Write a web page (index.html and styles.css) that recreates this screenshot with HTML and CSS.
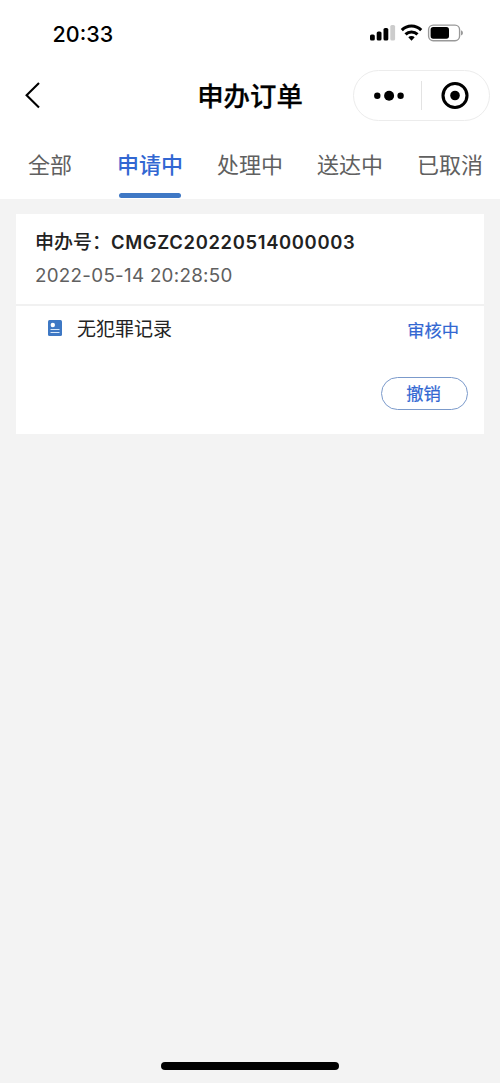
FILE: index.html
```html
<!DOCTYPE html>
<html lang="zh-CN">
<head>
<meta charset="utf-8">
<title>申办订单</title>
<link rel="stylesheet" href="styles.css">
</head>
<body>
<div class="screen">
  <header class="status-bar">
    <span class="clock">20:33</span>
    <svg class="status-icons" width="94" height="18" viewBox="0 0 94 18">
      <rect x="0" y="10.5" width="4.8" height="6" rx="1.6"/>
      <rect x="6.7" y="7.5" width="4.8" height="9" rx="1.6"/>
      <rect x="13.5" y="4" width="4.8" height="12.5" rx="1.6"/>
      <rect x="20.3" y="1" width="4.8" height="15.5" rx="1.6" fill="#ccc"/>
      <g fill="none" stroke="#000" stroke-width="3">
        <path d="M31.8 6.1a13.6 13.6 0 0 1 19.4 0"/>
        <path d="M35.5 10.4a8.4 8.4 0 0 1 12 0"/>
      </g>
      <path d="M41.5 16.7l-3.2-3.4a4.6 4.6 0 0 1 6.4 0z"/>
      <rect x="58.6" y="1.1" width="31" height="15.6" rx="4.6" fill="none" stroke="#999" stroke-width="1.4"/>
      <rect x="60.6" y="3.1" width="18.4" height="11.6" rx="2.6"/>
      <path d="M91 6.2q2 .8 2 2.7t-2 2.7z" fill="#999"/>
    </svg>
  </header>
  <nav class="nav-bar">
    <svg class="back" width="18" height="30" viewBox="0 0 18 30"><path d="M16 3L3.6 15.3L16 27.5" fill="none" stroke="#000" stroke-width="2.1"/></svg>
    <h1 class="title">申办订单</h1>
    <div class="capsule">
      <svg class="capsule-item" width="67" height="49" viewBox="0 0 67 49"><circle cx="23.3" cy="24.8" r="3.2"/><circle cx="35.1" cy="24.8" r="5"/><circle cx="46.6" cy="24.8" r="3.2"/></svg>
      <span class="capsule-line"></span>
      <svg class="capsule-item" width="67" height="49" viewBox="0 0 67 49"><circle cx="33" cy="24.5" r="12" fill="none" stroke="#000" stroke-width="3.1"/><circle cx="33" cy="24.5" r="4.8"/></svg>
    </div>
  </nav>
  <div class="tabs">
    <span class="tab">全部</span>
    <span class="tab active">申请中</span>
    <span class="tab">处理中</span>
    <span class="tab">送达中</span>
    <span class="tab">已取消</span>
  </div>
  <main class="card">
    <section class="order-head">
      <div class="order-no"><span class="label">申办号：</span><span class="code">CMGZC20220514000003</span></div>
      <div class="date">2022-05-14 20:28:50</div>
    </section>
    <section class="order-row">
      <svg class="doc" width="14" height="16" viewBox="0 0 14 16"><rect width="14" height="16" rx="1.5" fill="#3e78c4"/><circle cx="4.8" cy="5" r="2.2" fill="#fff"/><path d="M2.5 9.5h9M2.5 12.5h9" stroke="#d7e8fa" stroke-width="1.1"/></svg>
      <span class="item">无犯罪记录</span>
      <span class="state">审核中</span>
    </section>
    <div class="actions"><button class="revoke">撤销</button></div>
  </main>
  <div class="home-indicator"></div>
</div>
</body>
</html>
```
FILE: styles.css
```css
* { box-sizing: border-box; }
body {
  margin: 0;
  font-family: Inter, "Noto Sans CJK SC", sans-serif;
}
.screen {
  width: 500px;
  height: 1083px;
  background: #f3f3f3;
  display: flex;
  flex-direction: column;
}
.status-bar {
  height: 66px;
  background: #fff;
  display: flex;
  justify-content: space-between;
  align-items: center;
  padding: 0 36px 0 52.5px;
}
.clock {
  font-size: 21.5px;
  font-weight: 500;
  line-height: 26px;
  padding-top: 1px;
}
.nav-bar {
  height: 66px;
  padding: 4px 10px 0 23px;
  background: #fff;
  display: grid;
  grid-template-columns: 137px 1fr 137px;
  align-items: start;
}
.back { margin-top: 10px; }
.title {
  margin: 6px 0 0 -13px;
  text-align: center;
  font-size: 26.4px;
  line-height: 40px;
  font-weight: 500;
  white-space: nowrap;
  -webkit-text-stroke: 0.25px #000;
}
.capsule {
  height: 51px;
  width: 137px;
  border: 1px solid #ececec;
  border-radius: 26px;
  display: flex;
  align-items: center;
}
.capsule-line {
  width: 1px;
  height: 29px;
  background: #e3e3e3;
}
.tabs {
  height: 67px;
  background: #fff;
  display: grid;
  grid-template-columns: repeat(5, 100px);
}
.tab {
  display: flex;
  flex-direction: column;
  align-items: center;
  font-size: 22px;
  line-height: 32px;
  padding-top: 17px;
  color: #606060;
}
.active {
  color: #3267d2;
  font-weight: 500;
}
.active::after {
  content: "";
  width: 62px;
  height: 5px;
  margin-top: 12px;
  border-radius: 3px;
  background: #3f78c5;
}
.card {
  margin: 15px 16px 0;
  height: 220px;
  background: #fff;
}
.order-head {
  height: 92px;
  padding: 15px 19px 0;
  border-bottom: 2px solid #f1f1f1;
}
.order-no {
  display: flex;
  height: 28px;
  line-height: 28px;
  font-size: 19px;
  font-weight: 500;
  color: #222;
}
.code {
  font-size: 18.4px;
  font-weight: 600;
  line-height: 26px;
  letter-spacing: 0.66px;
}
.date {
  margin-top: 5px;
  font-size: 18.8px;
  line-height: 28px;
  letter-spacing: 0.28px;
  color: #606060;
}
.order-row {
  display: flex;
  align-items: flex-start;
  height: 56px;
  padding: 8px 25px 0 32px;
}
.doc { margin-top: 6px; }
.item {
  margin: 2px 0 0 15px;
  font-size: 19px;
  line-height: 28px;
  color: #222;
}
.state {
  margin: 3px 0 0 auto;
  font-size: 17.3px;
  line-height: 28px;
  color: #3267d2;
  -webkit-text-stroke: 0.2px #3267d2;
}
.actions {
  display: flex;
  justify-content: flex-end;
  padding: 15px 16px 0;
}
.revoke {
  width: 87px;
  height: 33px;
  padding: 0 2px 0 0;
  border: 1px solid #7b9acb;
  border-radius: 17px;
  background: #fff;
  color: #3267d2;
  -webkit-text-stroke: 0.2px #3267d2;
  font-family: inherit;
  font-size: 17.3px;
  line-height: 30px;
}
.home-indicator {
  width: 178px;
  height: 8px;
  margin: auto auto 13px 161px;
  border-radius: 4px;
  background: #000;
}
```
